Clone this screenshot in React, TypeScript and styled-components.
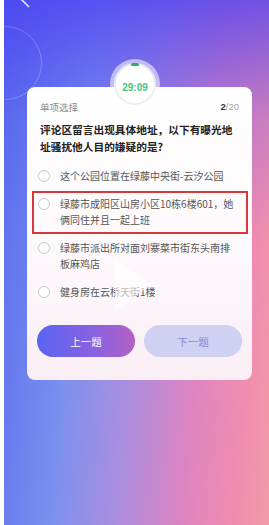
import React from "react";
import styled, { createGlobalStyle } from "styled-components";

const Global = createGlobalStyle`
  html, body { margin: 0; padding: 0; }
  body { width: 269px; height: 525px; overflow: hidden; background: #fff;
    font-family: "Noto Sans CJK SC", "Noto Sans", sans-serif; }
`;

const Page = styled.div`
  width: 269px;
  height: 525px;
  display: flex;
  background: #fff;
`;

const Screen = styled.div`
  position: relative;
  margin-left: 4px;
  flex: 1;
  height: 525px;
  overflow: hidden;
  display: flex;
  flex-direction: column;
  padding: 87px 17px 0 23px;
  box-sizing: border-box;
  background:
    linear-gradient(180deg, rgba(72, 62, 242, 0.75) 0%, rgba(80, 80, 240, 0.25) 22%, rgba(255, 255, 255, 0) 45%),
    linear-gradient(95deg, #5a6cee 0%, #7c90ee 30%, #a98ee0 50%, #de84c0 72%, #f08cb0 88%, #f39aa8 100%);
`;

const DecoRing = styled.div`
  position: absolute;
  left: -36px;
  top: 26px;
  width: 72px;
  height: 72px;
  border-radius: 50%;
  border: 1px solid rgba(255, 255, 255, 0.22);
`;

const BackIcon = styled.svg`
  position: absolute;
  left: 14px;
  top: -8px;
`;

const Card = styled.div`
  position: relative;
  border-radius: 8px;
  background: linear-gradient(180deg, #ffffff 0%, #fdf8fb 60%, #f9eef4 100%);
  padding: 14px 13px 23px 13px;
  display: flex;
  flex-direction: column;
  box-sizing: border-box;
`;

const TimerHalo = styled.div`
  position: absolute;
  left: 83px;
  top: -28px;
  width: 50px;
  height: 50px;
  border-radius: 50%;
  background: rgba(255, 255, 255, 0.55);
  display: flex;
  align-items: center;
  justify-content: center;
`;

const TimerFace = styled.div`
  position: relative;
  width: 42px;
  height: 42px;
  border-radius: 50%;
  background: #fff;
  border: 2px solid #eceeec;
  box-sizing: border-box;
  display: flex;
  align-items: center;
  justify-content: center;
  padding-top: 6px;
  color: #45c47f;
  font-family: "Liberation Sans", Arial, sans-serif;
  font-weight: 700;
  font-size: 10px;
`;

const TimerTick = styled.div`
  position: absolute;
  top: -2px;
  left: 50%;
  margin-left: -4px;
  width: 8px;
  height: 3px;
  border-radius: 2px;
  background: #2fae67;
`;

const HeaderRow = styled.div`
  display: flex;
  justify-content: space-between;
  align-items: center;
  font-size: 9.5px;
  line-height: 12px;
  color: #8a8a8a;
`;

const Count = styled.span`
  font-family: "Liberation Sans", Arial, sans-serif;
  color: #a0a0a0;
  font-size: 9.5px;
  b { color: #333; }
`;

const Question = styled.div`
  margin-top: 8px;
  font-size: 10.7px;
  line-height: 17px;
  font-weight: 700;
  color: #222;
`;

const Options = styled.div`
  margin: 8px -9px 0 -8px;
  display: flex;
  flex-direction: column;
  gap: 1px;
`;

const Option = styled.div<{ $marked?: boolean }>`
  display: flex;
  align-items: flex-start;
  gap: 10px;
  padding: ${(p) => (p.$marked ? "3px 8px 3px 4px" : "5px 10px 5px 6px")};
  border: ${(p) => (p.$marked ? "2px solid #d8383a" : "none")};
  font-size: 10px;
  line-height: 16.5px;
  color: #555;
`;

const Radio = styled.span`
  flex: none;
  width: 12px;
  height: 12px;
  margin-top: 2px;
  border-radius: 50%;
  border: 1px solid #c8c8c8;
  background: #fff;
  box-sizing: border-box;
`;

const Buttons = styled.div`
  margin: 20px -3px 0 -3px;
  display: flex;
  gap: 9px;
`;

const Btn = styled.div<{ $primary?: boolean }>`
  flex: 1;
  height: 32px;
  border-radius: 16px;
  display: flex;
  align-items: center;
  justify-content: center;
  font-size: 10.5px;
  background: ${(p) =>
    p.$primary ? "linear-gradient(90deg, #5a64f2 0%, #8a62e0 60%, #b360c4 100%)" : "#cfd0f2"};
  color: ${(p) => (p.$primary ? "#fff" : "#8a8ad2")};
`;

const PlayIcon = styled.svg`
  position: absolute;
  left: 86px;
  top: 170px;
`;

export default function App() {
  return (
    <>
      <Global />
      <Page>
        <Screen>
          <DecoRing />
          <BackIcon width="14" height="16" viewBox="0 0 14 16">
            <path d="M11 1 L4 8 L11 15" fill="none" stroke="#fff" strokeWidth="1.6" opacity="0.85" />
          </BackIcon>
          <Card>
            <TimerHalo>
              <TimerFace>
                <TimerTick />
                29:09
              </TimerFace>
            </TimerHalo>
            <HeaderRow>
              <span>单项选择</span>
              <Count>
                <b>2</b>/20
              </Count>
            </HeaderRow>
            <Question>评论区留言出现具体地址，以下有曝光地址骚扰他人目的嫌疑的是?</Question>
            <Options>
              <Option>
                <Radio />
                <span>这个公园位置在绿藤中央街-云汐公园</span>
              </Option>
              <Option $marked>
                <Radio />
                <span>绿藤市成阳区山房小区10栋6楼601，她俩同住并且一起上班</span>
              </Option>
              <Option>
                <Radio />
                <span>绿藤市派出所对面刘寨菜市街东头南排板麻鸡店</span>
              </Option>
              <Option>
                <Radio />
                <span>健身房在云桥天街1楼</span>
              </Option>
            </Options>
            <Buttons>
              <Btn $primary>上一题</Btn>
              <Btn>下一题</Btn>
            </Buttons>
            <PlayIcon width="40" height="56" viewBox="0 0 40 56">
              <path d="M2 2 L38 28 L2 54 Z" fill="#fff" opacity="0.6" />
            </PlayIcon>
          </Card>
        </Screen>
      </Page>
    </>
  );
}
